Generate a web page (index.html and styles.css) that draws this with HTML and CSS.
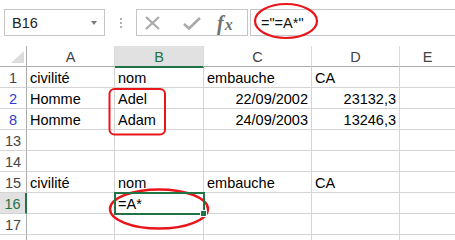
FILE: index.html
```html
<!DOCTYPE html>
<html>
<head>
<meta charset="utf-8">
<link rel="stylesheet" href="styles.css">
</head>
<body>
<div class="page">
  <div class="fbar">
    <div class="namebox"><span>B16</span><span class="caret"></span></div>
    <div class="dots"><i></i><i></i><i></i></div>
    <div class="btns">
      <svg class="ic" width="20" height="16" viewBox="0 0 20 16"><path d="M3 2 L16 14 M16 2 L3 14" stroke="#a9a9a9" stroke-width="2.2" fill="none"/></svg>
      <svg class="ic" width="20" height="16" viewBox="0 0 20 16"><path d="M2 9 L7 13.5 L18 3" stroke="#a9a9a9" stroke-width="2.6" fill="none"/></svg>
      <span class="fx"><i>f</i><i class="x">x</i></span>
    </div>
    <div class="input">="=A*"</div>
  </div>
  <div class="sheet">
    <div class="corner"><span class="tri"></span></div>
    <div class="ch">A</div><div class="ch sel">B</div><div class="ch">C</div><div class="ch">D</div><div class="ch last">E</div>

    <div class="rh">1</div><div class="c">civilité</div><div class="c">nom</div><div class="c">embauche</div><div class="c">CA</div><div class="c last"></div>
    <div class="rh blue">2</div><div class="c">Homme</div><div class="c">Adel</div><div class="c r">22/09/2002</div><div class="c r">23132,3</div><div class="c last"></div>
    <div class="rh blue">8</div><div class="c">Homme</div><div class="c">Adam</div><div class="c r">24/09/2003</div><div class="c r">13246,3</div><div class="c last"></div>
    <div class="rh">13</div><div class="c"></div><div class="c"></div><div class="c"></div><div class="c"></div><div class="c last"></div>
    <div class="rh">14</div><div class="c"></div><div class="c"></div><div class="c"></div><div class="c"></div><div class="c last"></div>
    <div class="rh">15</div><div class="c">civilité</div><div class="c">nom</div><div class="c">embauche</div><div class="c">CA</div><div class="c last"></div>
    <div class="rh sel">16</div><div class="c"></div><div class="c active">=A*<span class="selbox"><span class="handle"></span></span></div><div class="c"></div><div class="c"></div><div class="c last"></div>
    <div class="rh">17</div><div class="c"></div><div class="c"></div><div class="c"></div><div class="c"></div><div class="c last"></div>
    <div class="rh"></div><div class="c"></div><div class="c"></div><div class="c"></div><div class="c"></div><div class="c last"></div>
  </div>
  <svg class="notes" width="455" height="240" viewBox="0 0 455 240">
    <ellipse cx="286" cy="21" rx="31" ry="17" fill="none" stroke="#e8161b" stroke-width="2.2"/>
    <rect x="109.5" y="89" width="55.5" height="45.5" rx="5" fill="none" stroke="#e8161b" stroke-width="2"/>
    <ellipse cx="159" cy="209" rx="49" ry="19.5" fill="none" stroke="#e8161b" stroke-width="2.4"/>
  </svg>
</div>
</body>
</html>
```
FILE: styles.css
```css
html, body {
  margin: 0;
  padding: 0;
  background: #ffffff;
  overflow: hidden;
}
.page {
  position: relative;
  width: 455px;
  height: 240px;
  overflow: hidden;
  font-family: "Liberation Sans", Arial, sans-serif;
  font-size: 14.5px;
  color: #000;
}
.fbar {
  display: flex;
  align-items: stretch;
  height: 27px;
  padding-top: 9px;
  padding-left: 4px;
  box-sizing: content-box;
}
.namebox {
  width: 101px;
  box-sizing: border-box;
  border: 1px solid #c6c6c6;
  display: flex;
  align-items: center;
  justify-content: space-between;
  padding: 1px 7px 0 7px;
  color: #222;
}
.caret {
  width: 0;
  height: 0;
  border-left: 3.5px solid transparent;
  border-right: 3.5px solid transparent;
  border-top: 4px solid #7a7a7a;
}
.dots {
  width: 31px;
  display: flex;
  flex-direction: column;
  align-items: center;
  justify-content: center;
  gap: 2px;
}
.dots i {
  display: block;
  width: 2px;
  height: 2px;
  background: #b0b0b0;
}
.btns {
  width: 112px;
  box-sizing: border-box;
  border: 1px solid #c6c6c6;
  display: flex;
  align-items: center;
  padding-left: 6px;
  gap: 19px;
}
.ic { display: block; }
.fx {
  font-family: "Liberation Serif", "Times New Roman", serif;
  color: #707070;
  font-size: 20px;
  margin-left: -4px;
  font-weight: bold;
  line-height: 1;
}
.fx .x {
  font-size: 16px;
  margin-left: 1px;
}
.input {
  flex: 1;
  margin-left: 2px;
  box-sizing: border-box;
  border: 1px solid #c6c6c6;
  border-right: none;
  display: flex;
  align-items: center;
  padding: 1px 0 0 10px;
  color: #111;
}
.sheet {
  margin-top: 10px;
  display: grid;
  grid-template-columns: 27px 88px 89px 108px 88px 55px;
  grid-auto-rows: 21px;
}
.sheet > div {
  box-sizing: border-box;
  border-bottom: 1px solid #d4d4d4;
  border-right: 1px solid #d4d4d4;
}
.sheet > div.last { border-right: none; }
.corner {
  position: relative;
  border-bottom-color: #ababab !important;
  border-right-color: #ababab !important;
}
.tri {
  position: absolute;
  right: 2px;
  bottom: 3px;
  width: 0;
  height: 0;
  border-left: 13px solid transparent;
  border-bottom: 12px solid #dcdcdc;
}
.ch {
  border-bottom-color: #ababab !important;
  border-right-color: #dadada !important;
  color: #444;
  text-align: center;
  line-height: 17px;
  padding-top: 3px;
}
.ch.sel {
  background: #e1e1e1;
  color: #217346;
  border-bottom: 2px solid #217346 !important;
  margin-bottom: -1px;
  height: 22px;
  position: relative;
  z-index: 1;
}
.rh {
  border-right-color: #ababab !important;
  color: #444;
  display: flex;
  align-items: flex-end;
  justify-content: center;
  line-height: 17px;
}
.rh.blue { color: #2e3dd6; }
.rh.sel {
  background: #e1e1e1;
  color: #217346;
  border-right: 2px solid #217346 !important;
}
.c {
  display: flex;
  align-items: flex-end;
  line-height: 17px;
  padding-left: 3px;
  white-space: nowrap;
  position: relative;
}
.c.r {
  justify-content: flex-end;
  padding-left: 0;
  padding-right: 3px;
}
.active { z-index: 2; }
.selbox {
  position: absolute;
  left: -1px;
  top: -1px;
  right: -2px;
  bottom: -2px;
  border: 2px solid #217346;
}
.handle {
  position: absolute;
  right: -4px;
  bottom: -4px;
  width: 5px;
  height: 5px;
  background: #217346;
  border: 1px solid #fff;
}
.notes {
  position: absolute;
  left: 0;
  top: 0;
  pointer-events: none;
}
```
